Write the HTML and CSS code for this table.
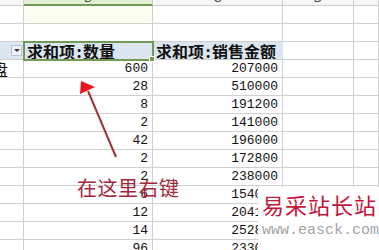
FILE: index.html
```html
<!DOCTYPE html>
<html>
<head>
<meta charset="utf-8">
<link rel="stylesheet" href="styles.css">
</head>
<body>
<div class="sheet">
  <div class="ch"></div>
  <div class="ch sel"><span>B</span></div>
  <div class="ch"><span>C</span></div>
  <div class="ch"><span>D</span></div>
  <div class="ch"></div>

  <div class="c"></div><div class="c tint"></div><div class="c"></div><div class="c"></div><div class="c"></div>
  <div class="c"></div><div class="c"></div><div class="c"></div><div class="c"></div><div class="c"></div>

  <div class="c hd"><span class="dd"><span class="tri"></span></span></div>
  <div class="c hd active">求和项<span class="colon">:</span>数量</div>
  <div class="c hd">求和项<span class="colon">:</span>销售金额</div>
  <div class="c"></div><div class="c"></div>

  <div class="c lbl"><span>盘</span></div><div class="c n">600</div><div class="c n">207000</div><div class="c"></div><div class="c"></div>
  <div class="c"></div><div class="c n">28</div><div class="c n">510000</div><div class="c"></div><div class="c"></div>
  <div class="c"></div><div class="c n">8</div><div class="c n">191200</div><div class="c"></div><div class="c"></div>
  <div class="c"></div><div class="c n">2</div><div class="c n">141000</div><div class="c"></div><div class="c"></div>
  <div class="c"></div><div class="c n">42</div><div class="c n">196000</div><div class="c"></div><div class="c"></div>
  <div class="c"></div><div class="c n">2</div><div class="c n">172800</div><div class="c"></div><div class="c"></div>
  <div class="c"></div><div class="c n">2</div><div class="c n">238000</div><div class="c"></div><div class="c"></div>
  <div class="c"></div><div class="c n">6</div><div class="c n">154000</div><div class="c"></div><div class="c"></div>
  <div class="c"></div><div class="c n">12</div><div class="c n">204100</div><div class="c"></div><div class="c"></div>
  <div class="c"></div><div class="c n">14</div><div class="c n">252800</div><div class="c"></div><div class="c"></div>
  <div class="c"></div><div class="c n">96</div><div class="c n">233000</div><div class="c"></div><div class="c"></div>
</div>

<svg class="arrow" width="379" height="250" viewBox="0 0 379 250">
  <line x1="116" y1="157" x2="88" y2="91" stroke="#a13236" stroke-width="2"/>
  <polygon points="81,81 80,94 95,87" fill="#e8141c"/>
</svg>

<div class="note">在这里右键</div>

<div class="mark">
  <div class="mark-cn">易采站长站</div>
  <div class="mark-en">www.easck.com</div>
</div>
</body>
</html>
```

FILE: styles.css
```css
html, body {
  margin: 0;
  padding: 0;
}
body {
  width: 379px;
  height: 250px;
  overflow: hidden;
  position: relative;
  background: #ffffff;
  font-family: "Liberation Sans", "Noto Sans CJK SC", sans-serif;
}
.sheet {
  display: grid;
  grid-template-columns: 24px 129px 130px 71px 1fr;
  grid-template-rows: 6px;
  grid-auto-rows: 18px;
  width: 379px;
}
.ch {
  box-sizing: border-box;
  border-right: 1px solid #cfcfcf;
  border-bottom: 1px solid #cfcfcf;
  background: #f6f6f6;
  overflow: hidden;
  text-align: center;
  font-size: 12px;
  color: #555;
}
.ch span {
  display: block;
  line-height: 14px;
  margin-top: -9px;
}
.ch.sel {
  background: #e3edd3;
  border-bottom: 2px solid #6f9b56;
  color: #3f6b2a;
}
.c {
  box-sizing: border-box;
  border-right: 1px solid #d0d0d0;
  border-bottom: 1px solid #d0d0d0;
  display: flex;
  align-items: center;
  overflow: hidden;
  white-space: nowrap;
}
.tint {
  background: #fbfdf0;
}
.hd {
  background: #dce6f1;
  font-family: "Noto Sans CJK SC", sans-serif;
  font-weight: 700;
  font-size: 16px;
  color: #111;
  padding-left: 3px;
  border-right-color: #dce6f1;
}
.hd:nth-child(13) {
  border-right-color: #d0d0d0;
}
.colon {
  display: inline-block;
  width: 8px;
  text-align: center;
}
.active {
  position: relative;
  overflow: visible;
  outline: 2px solid #6f9b56;
  outline-offset: -1px;
  z-index: 1;
}
.active::after {
  content: "";
  position: absolute;
  right: -3px;
  bottom: -3px;
  width: 4px;
  height: 4px;
  background: #6f9b56;
  border: 1px solid #ffffff;
}
.dd {
  margin-left: 8px;
  width: 11px;
  height: 11px;
  box-sizing: border-box;
  border: 1px solid #b9c3cf;
  background: #eef2f6;
  display: flex;
  align-items: center;
  justify-content: center;
}
.tri {
  width: 0;
  height: 0;
  border-left: 3px solid transparent;
  border-right: 3px solid transparent;
  border-top: 3px solid #333;
}
.lbl span {
  margin-left: -8px;
  font-family: "Noto Sans CJK SC", sans-serif;
  font-size: 16px;
  color: #111;
}
.n {
  justify-content: flex-end;
  padding-right: 4px;
  font-family: "Liberation Mono", monospace;
  font-size: 13px;
  color: #111;
}
.arrow {
  position: absolute;
  left: 0;
  top: 0;
}
.note {
  position: absolute;
  left: 77px;
  top: 175px;
  font-family: "Noto Sans CJK SC", sans-serif;
  font-size: 20px;
  line-height: 26px;
  letter-spacing: 0.5px;
  color: #a3283c;
}
.mark {
  position: absolute;
  left: 258px;
  top: 187px;
  width: 121px;
  height: 63px;
  background: #ffffff;
  display: flex;
  flex-direction: column;
  padding-left: 4px;
  box-sizing: border-box;
}
.mark-cn {
  font-family: "Noto Sans CJK SC", sans-serif;
  font-size: 22px;
  line-height: 34px;
  letter-spacing: 1px;
  color: #c4163c;
}
.mark-en {
  font-family: "Liberation Mono", monospace;
  font-size: 15px;
  line-height: 20px;
  color: #a3a3a3;
}
```
